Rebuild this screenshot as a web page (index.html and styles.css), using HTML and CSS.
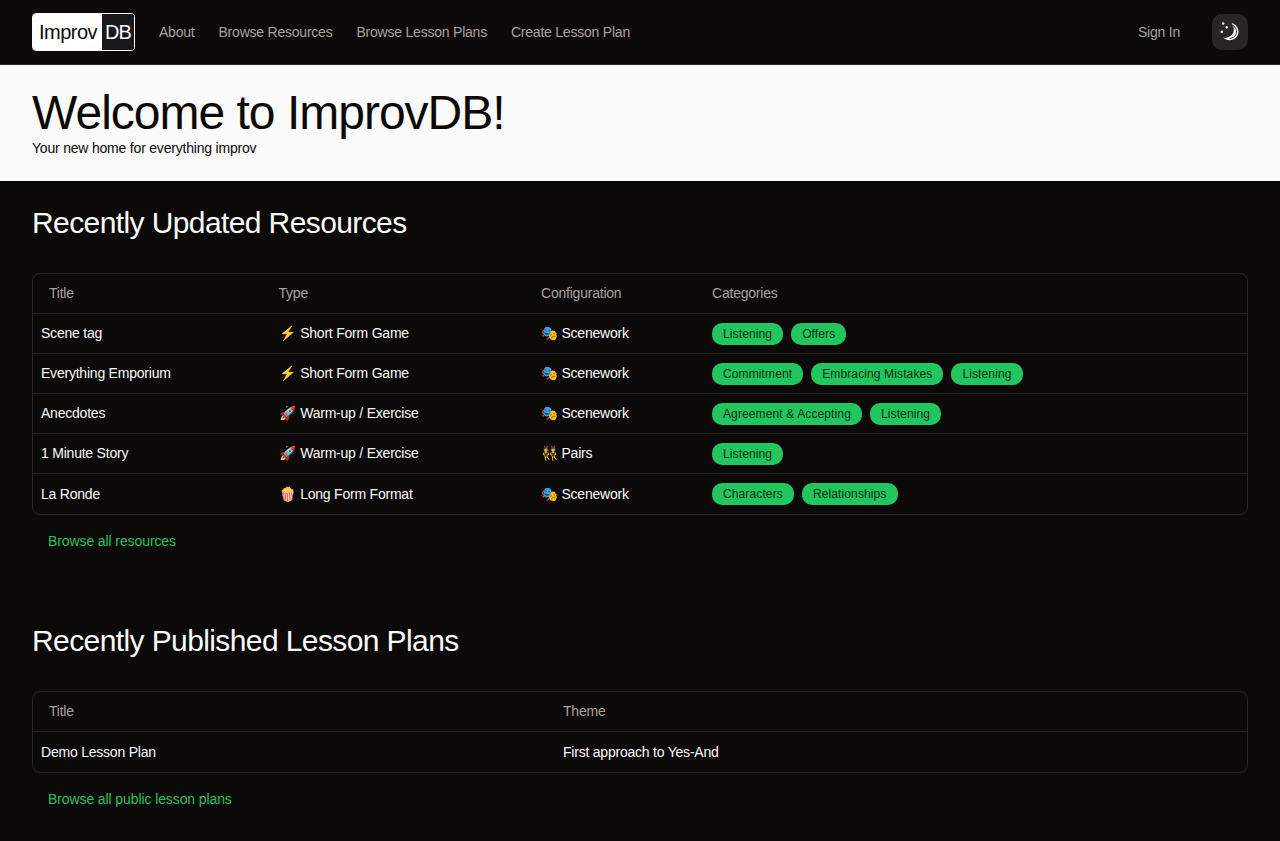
FILE: index.html
```html
<!DOCTYPE html>
<html lang="en">

<head>
    <meta charset="utf-8">
    <meta name="viewport" content="width=device-width, initial-scale=1.0">
    <title>ImprovDB</title>
    <link rel="stylesheet" href="styles.css">
</head>

<body>

    <nav class="topbar">
        <a class="logo" href="#"><span class="logoImprov">Improv</span><span class="logoDb">DB</span></a>
        <a class="navlink" href="#">About</a>
        <a class="navlink" href="#">Browse Resources</a>
        <a class="navlink" href="#">Browse Lesson Plans</a>
        <a class="navlink" href="#">Create Lesson Plan</a>
        <a class="navlink signin" href="#">Sign In</a>
        <button class="theme" aria-label="Toggle theme">
            <svg width="20" height="20" viewBox="0 0 20 20" fill="none">
                <path d="M11.500 1C15.500 2 18.500 5.500 18.500 9.800C18.500 14.500 14.500 18.300 9.800 18.300C7.300 18.300 5 17.400 3.200 15.800C8.800 16.500 13.600 13.200 13.800 8.300C13.900 5.500 13 3 11.500 1Z" fill="#fafafa"/>
                <path d="M13.300 3.500C15.500 5.500 16.800 7.500 16.600 10.200C16.300 13.600 13.500 16 10 16.500" stroke="#292524" stroke-width="1" stroke-linecap="round"/>
                <circle cx="3.200" cy="1.500" r="1.200" fill="#fafafa"/>
                <circle cx="6.700" cy="5.200" r="1.200" fill="#fafafa"/>
                <circle cx="1.800" cy="9.800" r="1.200" fill="#fafafa"/>
            </svg>
        </button>
    </nav>

    <header class="hero">
        <h1>Welcome to ImprovDB!</h1>
        <p>Your new home for everything improv</p>
    </header>

    <main>
        <section class="block">
            <h2>Recently Updated Resources</h2>
            <div class="tableWrap">
                <table>
                    <colgroup>
                        <col class="colTitle">
                        <col class="colType">
                        <col class="colConfig">
                        <col>
                    </colgroup>
                    <thead>
                        <tr>
                            <th>Title</th>
                            <th>Type</th>
                            <th>Configuration</th>
                            <th>Categories</th>
                        </tr>
                    </thead>
                    <tbody>
                        <tr>
                            <td>Scene tag</td>
                            <td><span class="emoji">⚡</span> Short Form Game</td>
                            <td>🎭 Scenework</td>
                            <td class="tags"><span class="tag">Listening</span><span class="tag">Offers</span></td>
                        </tr>
                        <tr>
                            <td>Everything Emporium</td>
                            <td><span class="emoji">⚡</span> Short Form Game</td>
                            <td>🎭 Scenework</td>
                            <td class="tags"><span class="tag">Commitment</span><span class="tag">Embracing Mistakes</span><span class="tag">Listening</span></td>
                        </tr>
                        <tr>
                            <td>Anecdotes</td>
                            <td><span class="emoji">🚀</span> Warm-up / Exercise</td>
                            <td>🎭 Scenework</td>
                            <td class="tags"><span class="tag">Agreement &amp; Accepting</span><span class="tag">Listening</span></td>
                        </tr>
                        <tr>
                            <td>1 Minute Story</td>
                            <td><span class="emoji">🚀</span> Warm-up / Exercise</td>
                            <td>👯 Pairs</td>
                            <td class="tags"><span class="tag">Listening</span></td>
                        </tr>
                        <tr>
                            <td>La Ronde</td>
                            <td><span class="emoji">🍿</span> Long Form Format</td>
                            <td>🎭 Scenework</td>
                            <td class="tags"><span class="tag">Characters</span><span class="tag">Relationships</span></td>
                        </tr>
                    </tbody>
                </table>
            </div>
            <a class="more" href="#">Browse all resources</a>
        </section>

        <section class="block">
            <h2>Recently Published Lesson Plans</h2>
            <div class="tableWrap">
                <table>
                    <colgroup>
                        <col class="colPlan">
                        <col>
                    </colgroup>
                    <thead>
                        <tr>
                            <th>Title</th>
                            <th>Theme</th>
                        </tr>
                    </thead>
                    <tbody>
                        <tr>
                            <td>Demo Lesson Plan</td>
                            <td>First approach to Yes-And</td>
                        </tr>
                    </tbody>
                </table>
            </div>
            <a class="more" href="#">Browse all public lesson plans</a>
        </section>
    </main>

</body>

</html>
```

FILE: styles.css
```css
* {
    box-sizing: border-box;
}

body {
    margin: 0;
    background-color: #0c0a09;
    color: #fafaf9;
    font-family: "Liberation Sans", Arial, sans-serif;
    font-size: 14px;
    line-height: 20px;
    letter-spacing: -0.22px;
}

a {
    text-decoration: none;
}

.topbar {
    display: flex;
    align-items: center;
    gap: 24px;
    height: 65px;
    padding: 0 32px;
    border-bottom: 1px solid #27272a;
}

.logo {
    display: flex;
    height: 38px;
    border: 1px solid #fafafa;
    border-radius: 4px;
    overflow: hidden;
    font-size: 20px;
    line-height: 36px;
    letter-spacing: -0.5px;
}

.logoImprov {
    width: 69px;
    padding-left: 6px;
    background-color: #fff;
    color: #0c0a09;
}

.logoDb {
    width: 32px;
    padding-left: 3px;
    background-color: #18181b;
    color: #fafafa;
    letter-spacing: -1px;
}

.navlink {
    color: #a8a29e;
}

.signin {
    margin-left: auto;
    margin-right: 8px;
}

.theme {
    display: flex;
    align-items: center;
    justify-content: center;
    width: 36px;
    height: 36px;
    padding: 0;
    border: 0;
    border-radius: 10px;
    background-color: #292524;
}

.hero {
    height: 116px;
    padding: 24px 32px 0;
    background-color: #fafafa;
    color: #0c0a09;
}

.hero h1 {
    margin: 0;
    font-size: 48px;
    font-weight: 400;
    line-height: 48px;
    letter-spacing: -1px;
}

.hero p {
    margin: 1px 0 0;
    letter-spacing: -0.2px;
}

.block {
    padding: 24px 32px 0;
    height: 418px;
}

.block h2 {
    margin: 0 0 32px;
    font-size: 30px;
    font-weight: 400;
    line-height: 36px;
    letter-spacing: -0.6px;
}

.tableWrap {
    border: 1px solid #27272a;
    border-radius: 8px;
    overflow: hidden;
}

table {
    width: 100%;
    border-collapse: collapse;
    table-layout: fixed;
}

.colTitle {
    width: 237.5px;
}

.colType {
    width: 262.5px;
}

.colConfig {
    width: 171px;
}

.colPlan {
    width: 522px;
}

th {
    height: 39px;
    padding: 0 8px;
    color: #a8a29e;
    font-weight: 400;
    text-align: left;
}

th:first-child {
    padding-left: 16px;
}

td {
    height: 40px;
    padding: 0 8px;
    border-top: 1px solid #27272a;
}

td.tags {
    padding-top: 2px;
}

tbody tr:last-child td {
    height: 41px;
    padding-top: 0;
}

.emoji {
    margin-right: 1px;
    letter-spacing: 0;
}

.tag {
    display: inline-block;
    height: 22px;
    margin-right: 8px;
    padding: 0 11px;
    border-radius: 10px;
    background-color: #22c55e;
    color: #052e16;
    font-size: 12px;
    line-height: 22px;
    letter-spacing: 0.12px;
    vertical-align: middle;
}

.more {
    display: block;
    padding: 16px 16px 0;
    color: #22c55e;
    letter-spacing: -0.1px;
}
```
